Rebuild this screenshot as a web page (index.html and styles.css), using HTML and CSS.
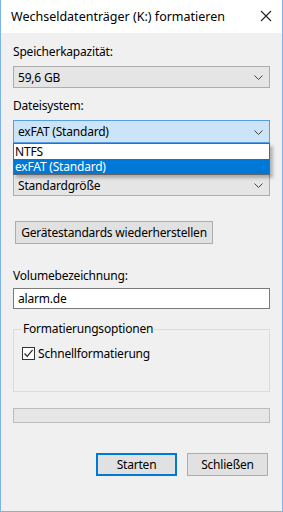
FILE: index.html
```html
<!DOCTYPE html>
<html lang="de">
<head>
  <meta charset="UTF-8" />
  <meta name="viewport" content="width=device-width, initial-scale=1.0"/>
  <title>Wechseldatenträger (K:) formatieren</title>
  <link rel="stylesheet" href="styles.css">
</head>
<body>

<div class="window">
  <div class="titlebar">
    <span class="title">Wechseldatenträger (K:) formatieren</span>
    <svg class="close" width="12" height="12" viewBox="0 0 12 12">
      <path d="M1 1 L11 11 M11 1 L1 11" stroke="#222" stroke-width="1.1" fill="none"/>
    </svg>
  </div>

  <div class="content">
    <div class="label first">Speicherkapazität:</div>
    <div class="select">
      <span>59,6 GB</span>
      <svg class="chev" width="9" height="5" viewBox="0 0 9 5"><path d="M0.5 0.5 L4.5 4.5 L8.5 0.5" stroke="#444" fill="none"/></svg>
    </div>

    <div class="label">Dateisystem:</div>
    <div class="drop-wrap">
      <div class="select active">
        <span>exFAT (Standard)</span>
        <svg class="chev" width="9" height="5" viewBox="0 0 9 5"><path d="M0.5 0.5 L4.5 4.5 L8.5 0.5" stroke="#444" fill="none"/></svg>
      </div>
      <div class="drop-list">
        <div class="opt">NTFS</div>
        <div class="opt selected">exFAT (Standard)</div>
      </div>
    </div>

    <!-- label of the third box is covered by the open list -->
    <div class="label-space"></div>
    <div class="select">
      <span>Standardgröße</span>
      <svg class="chev" width="9" height="5" viewBox="0 0 9 5"><path d="M0.5 0.5 L4.5 4.5 L8.5 0.5" stroke="#444" fill="none"/></svg>
    </div>

    <button class="btn restore">Gerätestandards wiederherstellen</button>

    <div class="label vol">Volumebezeichnung:</div>
    <div class="textbox">alarm.de</div>

    <div class="group">
      <div class="group-title">Formatierungsoptionen</div>
      <label class="check">
        <span class="box">
          <svg width="11" height="11" viewBox="0 0 11 11"><path d="M1.5 5.5 L4.2 8.3 L9.6 1.8" stroke="#222" stroke-width="1.2" fill="none"/></svg>
        </span>
        Schnellformatierung
      </label>
    </div>

    <div class="progress"></div>

    <div class="actions">
      <button class="btn default">Starten</button>
      <button class="btn">Schließen</button>
    </div>
  </div>
</div>

</body>
</html>
```

FILE: styles.css
```css
body {
  margin: 0;
  font-family: "Noto Sans", "Open Sans", sans-serif;
  font-size: 12px;
  letter-spacing: -0.2px;
  color: #000;
  background: #f0f0f0;
}
.window {
  width: 281px;
  height: 511px;
  border: 1px solid #7fb3e8;
  border-top: none;
  background: #f0f0f0;
}
.titlebar {
  height: 33px;
  background: #fff;
  display: flex;
  align-items: center;
  justify-content: space-between;
  padding: 0 10px 0 10px;
}
.title {
  font-size: 12.5px;
  letter-spacing: 0;
  margin-top: -1px;
}
.close {
  margin-top: -1px;
}
.content {
  padding: 0 12px;
}
.label {
  height: 16px;
  line-height: 16px;
  margin-top: 10px;
}
.label.first {
  margin-top: 11px;
}
.label.vol {
  margin-top: 24px;
}
.label-space {
  height: 24px;
}
.select {
  box-sizing: border-box;
  height: 22px;
  margin-top: 6px;
  background: #e5e5e5;
  border: 1px solid #adadad;
  display: flex;
  align-items: center;
  justify-content: space-between;
  padding: 0 6px 0 4px;
}
.label-space + .select {
  margin-top: 7px;
}
.select.active {
  background: #cce4f7;
  border-color: #569de5;
  height: 23px;
}
.chev {
  margin-top: 1px;
}
.drop-wrap {
  position: relative;
}
.drop-list {
  position: absolute;
  left: 0;
  right: 0;
  top: 100%;
  background: #fff;
  border: 1px solid #646464;
  box-shadow: 3px 3px 3px rgba(0,0,0,0.25);
  z-index: 5;
}
.opt {
  height: 15px;
  line-height: 15px;
  padding-left: 1px;
  overflow: hidden;
}
.opt.selected {
  background: #0078d7;
  color: #fff;
}
.btn {
  font-family: inherit;
  font-size: 12px;
  letter-spacing: -0.2px;
  color: #000;
  background: #e1e1e1;
  border: 1px solid #adadad;
  height: 23px;
  padding: 0;
  box-sizing: border-box;
}
.restore {
  display: block;
  margin: 25px 0 0 2px;
  width: 198px;
}
.textbox {
  box-sizing: border-box;
  height: 21px;
  margin-top: 4px;
  background: #fff;
  border: 1px solid #7a7a7a;
  line-height: 19px;
  padding-left: 4px;
}
.group {
  box-sizing: border-box;
  height: 63px;
  margin-top: 20px;
  border: 1px solid #dcdcdc;
  padding: 0 8px;
}
.group-title {
  width: max-content;
  margin-top: -9px;
  padding: 0 1px;
  background: #f0f0f0;
  line-height: 16px;
}
.check {
  display: flex;
  align-items: center;
  gap: 3px;
  margin-top: 8px;
}
.box {
  box-sizing: border-box;
  width: 13px;
  height: 13px;
  background: #fff;
  border: 1px solid #333;
  display: flex;
  align-items: center;
  justify-content: center;
}
.progress {
  box-sizing: border-box;
  height: 15px;
  margin-top: 16px;
  background: #e6e6e6;
  border: 1px solid #bcbcbc;
}
.actions {
  display: flex;
  justify-content: flex-end;
  gap: 10px;
  margin-top: 30px;
  padding-right: 2px;
}
.actions .btn {
  width: 81px;
}
.btn.default {
  border: 2px solid #0078d7;
}
```
